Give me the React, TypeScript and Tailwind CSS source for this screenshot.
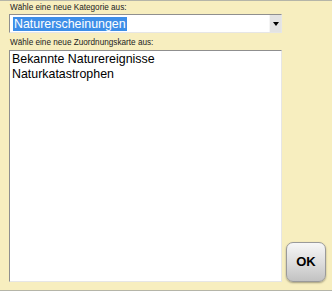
import React from 'react';

export default function App() {
  return (
    <div className="w-[332px] h-[291px] bg-[#f7eebf] border-t border-b border-[#b5b5a8] flex flex-col pl-[9px] pr-[50px] pt-[2px] font-['Liberation_Sans',Arial,sans-serif] text-black overflow-hidden relative">
      <div className="text-[8.2px] leading-[10px] pl-[1px] text-[#222]">Wähle eine neue Kategorie aus:</div>
      <div className="mt-[1px] h-[19px] w-[273px] flex bg-white border border-t-[#8f8f8f] border-l-[#8f8f8f] border-r-[#e6e6e6] border-b-[#e6e6e6]">
        <div className="flex-1 flex items-center pl-[3px]">
          <span className="bg-[#3d8ee8] text-white text-[12.4px] leading-[14px] px-[1px]">Naturerscheinungen</span>
        </div>
        <div className="w-[12px] bg-[#e3e3e3] border-l border-[#f5f5f5] flex items-center justify-center">
          <svg width="6" height="4" viewBox="0 0 6 4"><path d="M0 0h6L3 4z" fill="#000" /></svg>
        </div>
      </div>
      <div className="mt-[5px] text-[8.2px] leading-[10px] pl-[1px] text-[#222]">Wähle eine neue Zuordnungskarte aus:</div>
      <div className="mt-[2px] h-[232px] w-[273px] bg-white border border-t-[#8f8f8f] border-l-[#8f8f8f] border-r-[#e6e6e6] border-b-[#e6e6e6] pl-[2px] pt-[1px] text-[12.4px] leading-[15px]">
        <div>Bekannte Naturereignisse</div>
        <div>Naturkatastrophen</div>
      </div>
      <button className="absolute left-[286px] top-[241px] w-[40px] h-[40px] rounded-[7px] border border-[#9a9a9a] bg-gradient-to-b from-[#f7f7f7] via-[#dedede] to-[#c2c2c2] shadow-[0_1px_2px_rgba(0,0,0,0.35)] flex items-center justify-center font-bold text-[13px] text-black">
        OK
      </button>
    </div>
  );
}
